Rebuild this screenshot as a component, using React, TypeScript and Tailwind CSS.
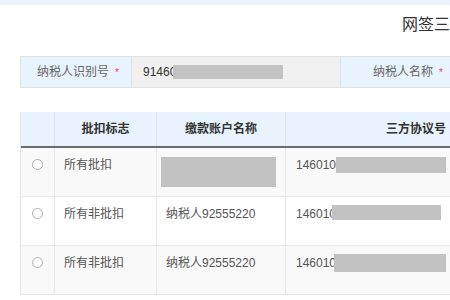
import React from "react";

interface Row {
  flag: string;
  account: string | null;
  prefix: string;
  maskW: number;
  maskH: number;
  maskTop: number;
  maskLeft: number;
  striped: boolean;
}

const ROWS: Row[] = [
  { flag: "所有批扣", account: null, prefix: "146010", maskW: 110, maskH: 16, maskTop: 9, maskLeft: 0, striped: true },
  { flag: "所有非批扣", account: "纳税人92555220", prefix: "146010", maskW: 109, maskH: 15, maskTop: 8, maskLeft: -4, striped: false },
  { flag: "所有非批扣", account: "纳税人92555220", prefix: "146010", maskW: 112, maskH: 18, maskTop: 8, maskLeft: -2, striped: true },
];

function Radio() {
  return <span className="block w-[11px] h-[11px] rounded-full border border-[#b0b0b0] bg-white" />;
}

export default function App() {
  return (
    <div
      className="w-[450px] h-[300px] overflow-hidden bg-white text-[12px] text-[#555]"
      style={{ fontFamily: '"Liberation Sans", "Noto Sans CJK SC", sans-serif' }}
    >
      <div className="w-[900px]">
        {/* top strip */}
        <div className="h-[5px] bg-[#eaf3fc]" />

        {/* title */}
        <div className="pl-[402px] pt-[9px] h-[51px] text-[16px] leading-[22px] text-[#333] whitespace-nowrap">
          网签三方协议查询
        </div>

        {/* form row */}
        <div className="flex ml-[20px] h-[32px] border border-[#dde3ea]">
          <div className="w-[111px] bg-[#e8f3fd] flex items-center justify-end pr-[12px] text-[#666] border-r border-[#dde3ea]">
            纳税人识别号<span className="text-[#f23d5c] ml-[6px] text-[10px]">*</span>
          </div>
          <div className="w-[209px] bg-[#f0f0f0] flex items-center pl-[11px] text-[#333] border-r border-[#dde3ea]">
            91460
            <span className="block -ml-[3px] w-[110px] h-[14px] bg-[#c2c2c2]" />
          </div>
          <div className="w-[115px] bg-[#e8f3fd] flex items-center justify-end pr-[12px] text-[#666] border-r border-[#dde3ea]">
            纳税人名称<span className="text-[#f23d5c] ml-[6px] text-[10px]">*</span>
          </div>
          <div className="w-[209px] bg-[#f0f0f0]" />
        </div>

        {/* table */}
        <div className="ml-[20px] mt-[24px] border-l border-[#e3e3e3]">
          <div className="flex h-[36px] bg-[#e8f3fd] border-b-2 border-[#6b6b6b] font-bold text-[#333]">
            <div className="w-[34px] border-r border-[#dce6f0]" />
            <div className="w-[102px] flex items-center justify-center border-r border-[#dce6f0]">批扣标志</div>
            <div className="w-[129px] flex items-center justify-center border-r border-[#dce6f0]">缴款账户名称</div>
            <div className="w-[260px] flex items-center justify-center">三方协议号</div>
          </div>
          {ROWS.map((r, i) => (
            <div
              key={i}
              className={`flex h-[49px] border-b border-[#e8e8e8] ${r.striped ? "bg-[#f9f9f9]" : "bg-white"}`}
            >
              <div className="w-[34px] border-r border-[#e8e8e8] flex justify-center pt-[11px]">
                <Radio />
              </div>
              <div className="w-[102px] border-r border-[#e8e8e8] pl-[9px] pt-[7px] leading-[20px]">{r.flag}</div>
              <div className="w-[129px] border-r border-[#e8e8e8] pl-[9px] pt-[7px] leading-[20px]">
                {r.account ?? <span className="block -ml-[5px] mt-[2px] w-[115px] h-[30px] bg-[#c2c2c2]" />}
              </div>
              <div className="w-[260px] pl-[10px] pt-[7px] leading-[20px] flex items-start">
                {r.prefix}
                <span
                  className="block bg-[#c2c2c2]"
                  style={{ width: r.maskW, height: r.maskH, marginTop: r.maskTop - 7, marginLeft: r.maskLeft }}
                />
              </div>
            </div>
          ))}
        </div>
      </div>
    </div>
  );
}
